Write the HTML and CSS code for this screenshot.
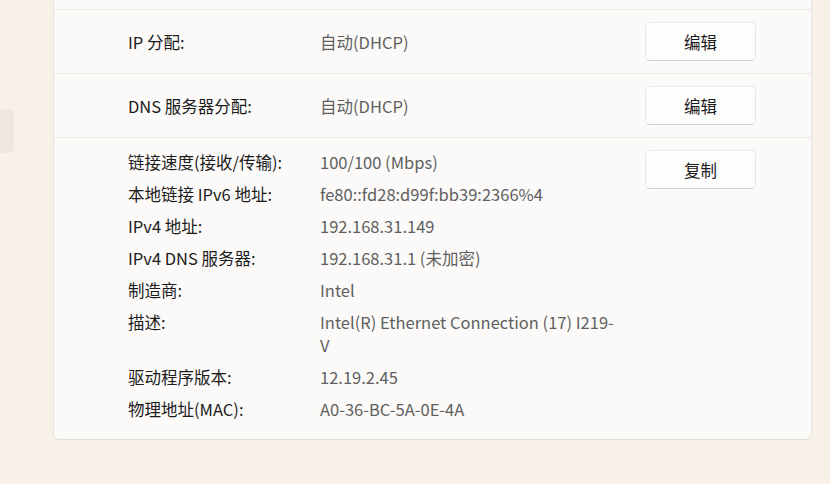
FILE: index.html
```html
<!DOCTYPE html>
<html lang="zh-CN">
<head>
<meta charset="utf-8">
<title>以太网 属性</title>
<link rel="stylesheet" href="styles.css">
</head>
<body>
<div class="page">
  <nav class="nav">
    <div class="nav-item"></div>
  </nav>
  <main class="main">
    <section class="card">
      <div class="row row-cut"></div>
      <div class="row">
        <div class="label">IP 分配:</div>
        <div class="value">自动(DHCP)</div>
        <button class="btn">编辑</button>
      </div>
      <div class="row">
        <div class="label">DNS 服务器分配:</div>
        <div class="value">自动(DHCP)</div>
        <button class="btn">编辑</button>
      </div>
      <div class="details">
        <dl class="props">
          <div class="prop"><dt>链接速度(接收/传输):</dt><dd>100/100 (Mbps)</dd></div>
          <div class="prop"><dt>本地链接 IPv6 地址:</dt><dd>fe80::fd28:d99f:bb39:2366%4</dd></div>
          <div class="prop"><dt>IPv4 地址:</dt><dd>192.168.31.149</dd></div>
          <div class="prop"><dt>IPv4 DNS 服务器:</dt><dd>192.168.31.1 (未加密)</dd></div>
          <div class="prop"><dt>制造商:</dt><dd>Intel</dd></div>
          <div class="prop"><dt>描述:</dt><dd>Intel(R) Ethernet Connection (17) I219-V</dd></div>
          <div class="prop"><dt>驱动程序版本:</dt><dd>12.19.2.45</dd></div>
          <div class="prop"><dt>物理地址(MAC):</dt><dd>A0-36-BC-5A-0E-4A</dd></div>
        </dl>
        <button class="btn">复制</button>
      </div>
    </section>
  </main>
</div>
</body>
</html>
```

FILE: styles.css
```css
* { box-sizing: border-box; }

html, body {
  margin: 0;
  padding: 0;
  width: 830px;
  height: 484px;
  overflow: hidden;
  background: #f8f1e9;
  font-family: "Noto Sans CJK SC", "Noto Sans", sans-serif;
  font-size: 16.5px;
  color: #1b1b1b;
}

.page {
  display: flex;
  height: 484px;
}

.nav {
  width: 53px;
  flex: none;
  padding-top: 109px;
}

.nav-item {
  width: 14px;
  height: 44px;
  background: #ede6e1;
  border-radius: 0 6px 6px 0;
}

.main {
  width: 759px;
  flex: none;
}

.card {
  margin-top: -12px;
  background: #fbfaf8;
  border: 1px solid #e6e2dd;
  border-bottom-color: #e0dcd6;
  border-radius: 6px;
}

.row {
  display: grid;
  grid-template-columns: 192px 1fr 111px;
  align-items: center;
  height: 64px;
  padding: 0 55px 0 74px;
  border-bottom: 1px solid #ede9e4;
}

.row-cut {
  height: 21px;
}

.label { color: #1b1b1b; }

.value { color: #5f5f5f; }

.btn {
  width: 111px;
  height: 39px;
  padding: 0;
  font: inherit;
  color: #1b1b1b;
  background: #fdfdfc;
  border: 1px solid #e8e6e3;
  border-bottom-color: #d5d3d0;
  border-radius: 5px;
}

.details {
  display: grid;
  grid-template-columns: 1fr 111px;
  align-items: start;
  padding: 12px 55px 18px 74px;
}

.props {
  margin: 0;
  display: flex;
  flex-direction: column;
  gap: 9px;
  padding-top: 1px;
}

.prop {
  display: grid;
  grid-template-columns: 192px 296px;
  line-height: 23px;
}

.prop dt { color: #1b1b1b; }

.prop dd {
  margin: 0;
  color: #5f5f5f;
}
```
